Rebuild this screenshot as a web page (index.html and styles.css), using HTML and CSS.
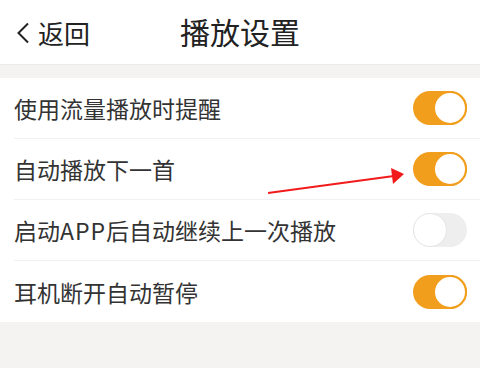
FILE: index.html
```html
<!DOCTYPE html>
<html lang="zh">
<head>
<meta charset="utf-8">
<link rel="stylesheet" href="styles.css">
</head>
<body>
<div class="page">
  <header class="nav">
    <div class="back">
      <svg class="chev" width="14" height="22" viewBox="0 0 14 22"><polyline points="12,1.5 2.5,11 12,20.5" fill="none" stroke="#222" stroke-width="2"/></svg>
      <span>返回</span>
    </div>
    <div class="title">播放设置</div>
  </header>
  <div class="gap"></div>
  <ul class="list">
    <li class="row"><span class="label">使用流量播放时提醒</span><span class="toggle on"><span class="knob"></span></span></li>
    <li class="row"><span class="label">自动播放下一首</span><span class="toggle on"><span class="knob"></span></span></li>
    <li class="row"><span class="label">启动<span class="latin">APP</span>后自动继续上一次播放</span><span class="toggle off"><span class="knob"></span></span></li>
    <li class="row"><span class="label">耳机断开自动暂停</span><span class="toggle on"><span class="knob"></span></span></li>
  </ul>
  <svg class="arrow" width="480" height="368" viewBox="0 0 480 368">
    <line x1="268" y1="193" x2="394" y2="176" stroke="#f21b1b" stroke-width="2"/>
    <polygon points="404,174 391,168 393,184" fill="#f21b1b"/>
  </svg>
</div>
</body>
</html>
```
FILE: styles.css
```css
* { box-sizing: border-box; }
html, body { margin: 0; padding: 0; }
body {
  background: #f4f3f1;
  font-family: "Noto Sans CJK SC", "Noto Sans", sans-serif;
  width: 480px;
  height: 368px;
  overflow: hidden;
}
.page { position: relative; width: 480px; height: 368px; }
.nav {
  position: relative;
  height: 65px;
  background: #fff;
  display: flex;
  align-items: center;
  justify-content: center;
  border-bottom: 1px solid #ecebe9;
}
.back {
  position: absolute;
  left: 16px;
  top: 0;
  height: 65px;
  display: flex;
  align-items: center;
  gap: 8px;
  font-size: 26px;
  color: #222;
}
.chev { display: block; margin-top: 1px; }
.title {
  font-size: 30px;
  color: #222;
  margin-top: -2px;
}
.gap { height: 13px; }
.list {
  list-style: none;
  margin: 0;
  padding: 0;
  background: #fff;
}
.row {
  height: 61px;
  margin-left: 14px;
  padding-right: 13px;
  display: flex;
  align-items: center;
  justify-content: space-between;
  border-bottom: 1px solid #f1f1f1;
}
.row:last-child { border-bottom: none; }
.label {
  font-size: 23px;
  color: #333;
}
.latin { letter-spacing: 1px; }
.toggle {
  width: 54px;
  height: 34px;
  border-radius: 17px;
  display: flex;
  align-items: center;
}
.toggle.on { background: #f29e1d; justify-content: flex-end; }
.toggle.off { background: #eeeeee; justify-content: flex-start; }
.knob {
  width: 34px;
  height: 34px;
  border-radius: 50%;
  background: #fff;
}
.toggle.on .knob { border: 2px solid #f29e1d; }
.toggle.off .knob { border: 1px solid #e6e6e6; }
.arrow { position: absolute; left: 0; top: 0; pointer-events: none; }
```
